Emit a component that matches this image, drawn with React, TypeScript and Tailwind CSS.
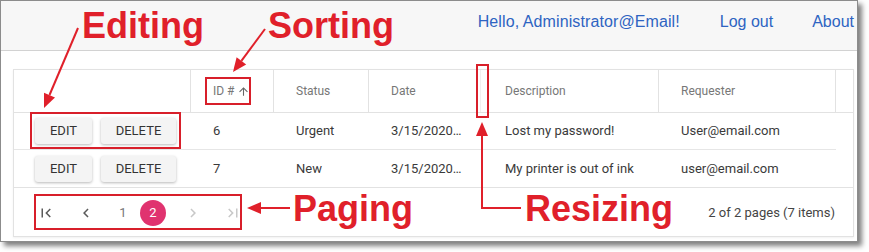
import React from "react";

const red = "#e0202a";

function PageIcon({ d, muted }: { d: string; muted?: boolean }) {
  return (
    <svg width="18" height="18" viewBox="0 0 24 24" fill={muted ? "#c8c8c8" : "#5a5a5a"}>
      <path d={d} />
    </svg>
  );
}

const FIRST = "M18.41 16.59L13.82 12l4.59-4.59L17 6l-6 6 6 6zM6 6h2v12H6z";
const PREV = "M15.41 7.41L14 6l-6 6 6 6 1.41-1.41L10.83 12z";
const NEXT = "M10 6L8.59 7.41 13.17 12l-4.58 4.59L10 18l6-6z";
const LAST = "M5.59 7.41L10.18 12l-4.59 4.59L7 18l6-6-6-6zM16 6h2v12h-2z";
const UP = "M4 12l1.41 1.41L11 7.83V20h2V7.83l5.58 5.59L20 12l-8-8-8 8z";

const rows = [
  { id: "6", status: "Urgent", date: "3/15/2020…", desc: "Lost my password!", who: "User@email.com" },
  { id: "7", status: "New", date: "3/15/2020…", desc: "My printer is out of ink", who: "user@email.com" },
];

function Btn({ label, w }: { label: string; w: string }) {
  return (
    <button
      className={`${w} h-[26px] rounded-[3px] bg-[#f4f4f4] text-[13px] text-[#333] uppercase shadow-[0_1px_3px_rgba(0,0,0,0.28)]`}
    >
      {label}
    </button>
  );
}

function Annotations() {
  return (
    <>
      <svg className="absolute inset-0 pointer-events-none" width="869" height="252">
        <g stroke={red} strokeWidth="2" fill="none">
          <line x1="78" y1="28" x2="49.5" y2="95" />
          <line x1="265" y1="29" x2="241.4" y2="60.8" />
          <line x1="290" y1="208" x2="260" y2="208" />
          <path d="M521 208 H482 V135" />
        </g>
        <g fill={red}>
          <polygon points="44,108 55,97.5 44,92.8" />
          <polygon points="233,72 246.2,64.4 236.6,57.2" />
          <polygon points="247,208 261,202 261,214" />
          <polygon points="482,122 476,136 488,136" />
        </g>
      </svg>
      <div className="absolute left-[30px] top-[112px] w-[151px] h-[37px] border-2 border-[#d81f2a]" />
      <div className="absolute left-[205px] top-[77px] w-[46px] h-[28px] border-2 border-[#d81f2a]" />
      <div className="absolute left-[476px] top-[64px] w-[13px] h-[54px] border-2 border-[#d81f2a]" />
      <div className="absolute left-[34px] top-[194px] w-[208px] h-[36px] border-2 border-[#d81f2a]" />
      {[
        { t: "Editing", c: "left-[82px] top-[8px]" },
        { t: "Sorting", c: "left-[268px] top-[8px]" },
        { t: "Paging", c: "left-[293px] top-[191px]" },
        { t: "Resizing", c: "left-[525px] top-[191px]" },
      ].map((a) => (
        <div
          key={a.t}
          className={`absolute ${a.c} font-['Liberation_Sans',Arial,sans-serif] font-bold text-[36px] leading-[36px] text-[#e0202a]`}
        >
          {a.t}
        </div>
      ))}
    </>
  );
}

export default function App() {
  const cols = ["w-[177px]", "w-[83px]", "w-[95px]", "w-[112px]", "w-[178px]", "w-[177px]"];
  return (
    <div className="relative w-[869px] h-[252px] bg-white overflow-hidden">
      <div className="w-[858px] h-[242px] border border-[#8c8c8c] bg-white shadow-[4px_4px_5px_rgba(0,0,0,0.5)] flex flex-col">
        <header className="h-[50px] shrink-0 bg-[#f7f7f7] border-b border-[#d2d2d2] flex items-center justify-end pr-[3px] pb-[7px] font-['Liberation_Sans',Arial,sans-serif] text-[16px] text-[#2e64c2]">
          <a className="tracking-[0.1px]">Hello, Administrator@Email!</a>
          <a className="ml-[40px]">Log out</a>
          <a className="ml-[39px]">About</a>
        </header>
        <div className="pl-[12px] pt-[18px] font-['Roboto',sans-serif]">
          <div className="w-[841px] border border-[#e2e2e2] shadow-[0_1px_2px_rgba(0,0,0,0.06)]">
            <div className="flex h-[43px] border-b border-[#e2e2e2] text-[12px] text-[#777]">
              <div className={`${cols[0]} border-r border-[#e2e2e2]`} />
              <div className={`${cols[1]} border-r border-[#e2e2e2] pl-[22px] flex items-center gap-[2px]`}>
                ID #
                <svg width="13" height="13" viewBox="0 0 24 24" fill="#666">
                  <path d={UP} />
                </svg>
              </div>
              <div className={`${cols[2]} border-r border-[#e2e2e2] pl-[22px] flex items-center`}>Status</div>
              <div className={`${cols[3]} border-r border-[#f0f0f0] pl-[22px] flex items-center`}>Date</div>
              <div className={`${cols[4]} border-r border-[#e2e2e2] pl-[24px] flex items-center`}>Description</div>
              <div className={`${cols[5]} border-r border-[#e2e2e2] pl-[22px] flex items-center`}>Requester</div>
              <div className="flex-1" />
            </div>
            {rows.map((r, i) => (
              <div key={r.id} className="flex h-[37px] text-[13px] text-[#3a3a3a]">
                <div className={`flex flex-1 items-center ${i === 0 ? "border-b border-[#e6e6e6]" : ""}`}>
                  <div className={`${cols[0]} pl-[21px] flex items-center gap-[9px]`}>
                    <Btn label="Edit" w="w-[57px]" />
                    <Btn label="Delete" w="w-[75px]" />
                  </div>
                  <div className={`${cols[1]} pl-[22px]`}>{r.id}</div>
                  <div className={`${cols[2]} pl-[22px]`}>{r.status}</div>
                  <div className={`${cols[3]} pl-[22px]`}>{r.date}</div>
                  <div className={`${cols[4]} pl-[24px]`}>{r.desc}</div>
                  <div className={`${cols[5]} pl-[22px]`}>{r.who}</div>
                </div>
                <div className="w-[17px]" />
              </div>
            ))}
            <div className="flex items-center justify-between h-[49px] border-t border-[#e2e2e2] pl-[12px] pr-[18px] pt-[2px]">
              <div className="flex items-center text-[13px]">
                <div className="w-[40px] flex justify-center"><PageIcon d={FIRST} /></div>
                <div className="w-[40px] flex justify-center"><PageIcon d={PREV} /></div>
                <div className="w-[34px] flex justify-center text-[#777]">1</div>
                <div className="w-[26px] h-[26px] rounded-full bg-[#e0336f] text-white flex items-center justify-center">2</div>
                <div className="w-[7px]" />
                <div className="w-[40px] flex justify-center"><PageIcon d={NEXT} muted /></div>
                <div className="w-[40px] flex justify-center"><PageIcon d={LAST} muted /></div>
              </div>
              <div className="text-[13px] text-[#444]">2 of 2 pages (7 items)</div>
            </div>
          </div>
        </div>
      </div>
      <Annotations />
    </div>
  );
}
